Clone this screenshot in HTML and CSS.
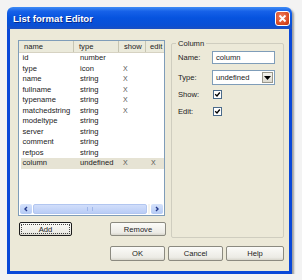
FILE: index.html
```html
<!DOCTYPE html>
<html lang="en">
<head>
  <meta charset="UTF-8" />
  <title>List format Editor</title>
  <link rel="stylesheet" href="styles.css">
</head>
<body>
  <div class="window">
    <div class="titlebar">
      <span class="title">List format Editor</span>
      <span class="close">
        <svg width="15" height="15" viewBox="0 0 15 15">
          <path d="M4.5 4.5 L10.5 10.5 M10.5 4.5 L4.5 10.5" stroke="#fff" stroke-width="1.8" />
        </svg>
      </span>
    </div>
    <div class="client">
      <div class="top">
        <div class="left">
          <div class="list">
            <div class="head">
              <div class="hcell c1">name</div>
              <div class="hcell c2">type</div>
              <div class="hcell c3">show</div>
              <div class="hcell c4">edit</div>
            </div>
            <div class="rows">
              <div class="row"><span>id</span><span>number</span><span></span><span></span></div>
              <div class="row"><span>type</span><span>icon</span><span class="x">X</span><span></span></div>
              <div class="row"><span>name</span><span>string</span><span class="x">X</span><span></span></div>
              <div class="row"><span>fullname</span><span>string</span><span class="x">X</span><span></span></div>
              <div class="row"><span>typename</span><span>string</span><span class="x">X</span><span></span></div>
              <div class="row"><span>matchedstring</span><span>string</span><span class="x">X</span><span></span></div>
              <div class="row"><span>modeltype</span><span>string</span><span></span><span></span></div>
              <div class="row"><span>server</span><span>string</span><span></span><span></span></div>
              <div class="row"><span>comment</span><span>string</span><span></span><span></span></div>
              <div class="row"><span>refpos</span><span>string</span><span></span><span></span></div>
              <div class="row selected"><span>column</span><span>undefined</span><span class="x">X</span><span class="x">X</span></div>
            </div>
            <div class="hscroll">
              <div class="arrow">
                <svg width="6" height="6" viewBox="0 0 6 6"><path d="M4 1 L2 3 L4 5" fill="none" stroke="#23388a" stroke-width="1.4"/></svg>
              </div>
              <div class="thumb"><span class="grip"></span></div>
              <div class="track"></div>
              <div class="arrow">
                <svg width="6" height="6" viewBox="0 0 6 6"><path d="M2 1 L4 3 L2 5" fill="none" stroke="#23388a" stroke-width="1.4"/></svg>
              </div>
            </div>
          </div>
          <div class="list-buttons">
            <button type="button" class="btn default"><span class="focus">Add</span></button>
            <button type="button" class="btn remove">Remove</button>
          </div>
        </div>
        <div class="group">
          <span class="legend">Column</span>
          <div class="field name-row">
            <span class="lbl">Name:</span>
            <span class="input">column</span>
          </div>
          <div class="field type-row">
            <span class="lbl">Type:</span>
            <span class="select">
              <span class="value">undefined</span>
              <span class="drop">
                <svg width="7" height="4" viewBox="0 0 7 4"><path d="M0 0 H7 L3.5 4 Z" fill="#000"/></svg>
              </span>
            </span>
          </div>
          <div class="field show-row">
            <span class="lbl">Show:</span>
            <span class="check">
              <svg width="7" height="7" viewBox="0 0 7 7"><path d="M1.2 3.2 L3 5 L5.8 1.5" fill="none" stroke="#000" stroke-width="1.3"/></svg>
            </span>
          </div>
          <div class="field edit-row">
            <span class="lbl">Edit:</span>
            <span class="check">
              <svg width="7" height="7" viewBox="0 0 7 7"><path d="M1.2 3.2 L3 5 L5.8 1.5" fill="none" stroke="#000" stroke-width="1.3"/></svg>
            </span>
          </div>
        </div>
      </div>
      <div class="bottom">
        <button type="button" class="btn">OK</button>
        <button type="button" class="btn">Cancel</button>
        <button type="button" class="btn help">Help</button>
      </div>
    </div>
  </div>
</body>
</html>
```

FILE: styles.css
```css
body {
  margin: 0;
  background-color: #f3f3f3;
  font-family: "Liberation Sans", Arial, sans-serif;
  font-size: 7.6px;
  color: #222;
}
.window {
  margin: 7px 0 0 7px;
  width: 285px;
  height: 267px;
  display: flex;
  flex-direction: column;
  border-radius: 6px 6px 0 0;
  box-shadow: 2px 2px 2px rgba(0, 0, 0, 0.35);
  overflow: hidden;
}
.titlebar {
  height: 22px;
  flex: none;
  display: flex;
  align-items: center;
  justify-content: space-between;
  padding: 0 2px 0 6px;
  background: linear-gradient(#3e8cf5 0%, #1661e8 20%, #0653de 50%, #0a4fd4 85%, #1d4fc0 100%);
}
.title {
  color: #fff;
  font-weight: bold;
  font-size: 9.6px;
  text-shadow: 1px 1px 0 #0a2a8a;
  margin-top: 1px;
}
.close {
  width: 15px;
  height: 15px;
  border: 1px solid #fff;
  border-radius: 3px;
  box-sizing: border-box;
  background: radial-gradient(circle at 40% 35%, #f08060, #d8461e 70%, #b83010);
  display: flex;
  align-items: center;
  justify-content: center;
}
.close svg {
  margin: -1px;
}
.client {
  flex: 1;
  background: #ece9d8;
  border: 3px solid #0a48d8;
  border-top: none;
  display: flex;
  flex-direction: column;
}
.top {
  display: flex;
  height: 209px;
  padding: 11px 0 0 8px;
  box-sizing: border-box;
}
.left {
  width: 147px;
  display: flex;
  flex-direction: column;
}
.list {
  height: 176px;
  background: #fff;
  border: 1px solid #7f9db9;
  box-sizing: border-box;
  display: flex;
  flex-direction: column;
}
.head {
  height: 12px;
  display: flex;
  background: #ebeadb;
  border-bottom: 1px solid #d6d2c2;
  box-sizing: border-box;
  overflow: hidden;
}
.hcell {
  padding-left: 5px;
  line-height: 11px;
  border-right: 1px solid #c7c5b2;
  box-sizing: border-box;
  white-space: nowrap;
}
.hcell.c1 { width: 55px; }
.hcell.c2 { width: 45px; }
.hcell.c3 { width: 27px; }
.hcell.c4 { flex: 1; padding-left: 4px; border-right: none; overflow: hidden; }
.rows {
  flex: 1;
}
.row {
  height: 10.5px;
  line-height: 10.5px;
  display: grid;
  grid-template-columns: 57.5px 43px 28px 1fr;
  padding-left: 3.5px;
  white-space: nowrap;
}
.row .x {
  color: #555;
  font-size: 7px;
}
.row.selected {
  background: #e6e3d4;
  margin-left: 2px;
  padding-left: 1.5px;
}
.hscroll {
  height: 10px;
  margin: 0 0 1px 0;
  display: flex;
  gap: 1px;
  padding: 0 1px;
}
.arrow {
  width: 12px;
  background: linear-gradient(#d5e2fb, #b4caf5);
  border-radius: 2px;
  display: flex;
  align-items: center;
  justify-content: center;
}
.thumb {
  width: 114px;
  background: linear-gradient(#d1defa, #bacdf6);
  border: 1px solid #b2c6f0;
  border-radius: 2px;
  box-sizing: border-box;
  display: flex;
  align-items: center;
  justify-content: center;
}
.grip {
  width: 4px;
  height: 4px;
  border-left: 1px solid #9fb6ea;
  border-right: 1px solid #9fb6ea;
}
.track {
  flex: 1;
  background: #f4f3ee;
}
.list-buttons {
  margin-top: 6px;
  display: flex;
  justify-content: space-between;
  padding-left: 1px;
}
.btn {
  height: 14px;
  padding: 0;
  font-family: "Liberation Sans", Arial, sans-serif;
  font-size: 7.6px;
  color: #222;
  background: linear-gradient(#fbfbf8, #ecebe5 80%, #d8d6cc);
  border: 1px solid #8b8a80;
  border-radius: 2px;
  box-sizing: border-box;
}
.btn.default {
  width: 53px;
  border: 1px solid #1c1c1c;
  padding: 1px;
}
.focus {
  display: block;
  height: 100%;
  line-height: 10px;
  border: 1px dotted #444;
  box-sizing: border-box;
}
.btn.remove {
  width: 56px;
  margin-right: -1px;
}
.group {
  position: relative;
  margin: 3px 0 0 6px;
  width: 113px;
  height: 195px;
  border: 1px solid #cfcdbf;
  border-radius: 2px;
  box-sizing: border-box;
  padding: 7px 0 0 6px;
}
.legend {
  position: absolute;
  top: -5px;
  left: 4px;
  padding: 0 2px;
  background: #ece9d8;
  line-height: 9px;
}
.field {
  display: flex;
  align-items: center;
}
.lbl {
  width: 34px;
}
.name-row {
  height: 13px;
}
.input {
  width: 63px;
  height: 13px;
  line-height: 11px;
  padding-left: 3px;
  background: #fff;
  border: 1px solid #7f9db9;
  box-sizing: border-box;
}
.type-row {
  height: 15px;
  margin-top: 6px;
}
.select {
  width: 63px;
  height: 15px;
  background: #fff;
  border: 1px solid #7f9db9;
  box-sizing: border-box;
  display: flex;
  align-items: center;
  justify-content: space-between;
  padding: 1px 1px 1px 3px;
}
.drop {
  width: 11px;
  height: 11px;
  background: linear-gradient(#f5f4ef, #dcdad0);
  border: 1px solid #9a988c;
  box-sizing: border-box;
  display: flex;
  align-items: center;
  justify-content: center;
}
.show-row {
  height: 9px;
  margin-top: 5px;
}
.edit-row {
  height: 9px;
  margin-top: 8px;
}
.check {
  width: 9px;
  height: 9px;
  background: #fff;
  border: 1px solid #4a6a8a;
  box-sizing: border-box;
  display: flex;
  align-items: center;
  justify-content: center;
  margin-left: 1px;
}
.bottom {
  margin-top: 8px;
  display: flex;
  gap: 3px;
  padding-left: 100px;
}
.bottom .btn {
  width: 55px;
  height: 15px;
}
.bottom .btn.help {
  width: 58px;
}
```
